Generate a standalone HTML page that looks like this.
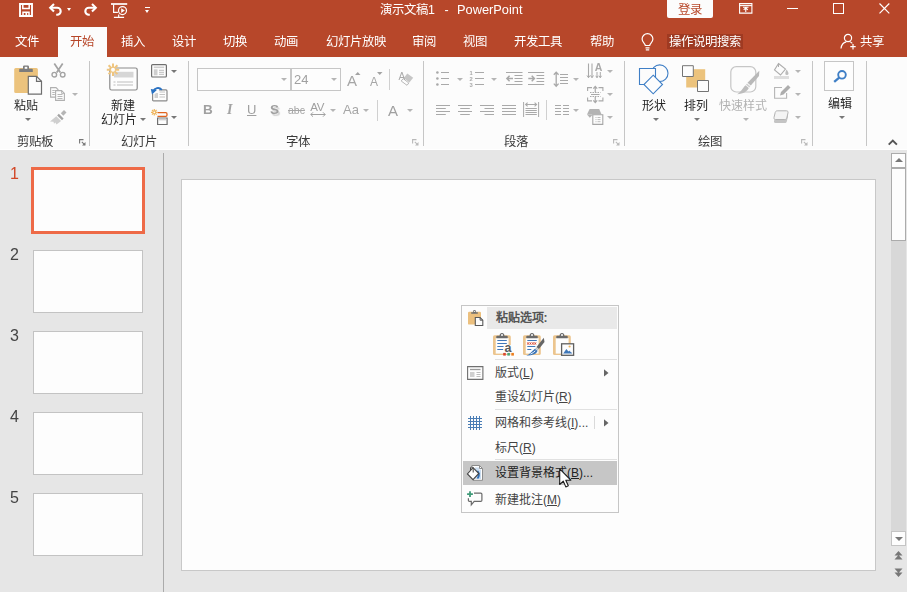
<!DOCTYPE html>
<html lang="zh-CN">
<head>
<meta charset="utf-8">
<title>PowerPoint</title>
<style>
*{box-sizing:border-box;margin:0;padding:0}
html,body{width:907px;height:592px;overflow:hidden;background:#e6e6e6}
body{font-family:"Liberation Sans",sans-serif;font-size:12.4px;color:#262626;position:relative}
.abs{position:absolute}
#all{position:absolute;left:0;top:0;width:907px;height:592px;will-change:transform}
#titlebar{position:absolute;left:0;top:0;width:907px;height:57px;background:#b7472a}
.t{position:absolute;white-space:nowrap;line-height:16px;height:16px}
.tab{position:absolute;top:33.700px;margin-left:.5px;color:#fff;font-size:12.4px;line-height:16px;white-space:nowrap}
#tabhome{position:absolute;left:58px;top:27px;width:49px;height:30px;background:#fcfcfc}
#ribbon{position:absolute;left:0;top:57px;width:907px;height:93px;background:#fcfcfc;border-bottom:1px solid #fff}
#ribbonline{position:absolute;left:0;top:150px;width:907px;height:1px;background:#d5d5d5}
.sep{position:absolute;top:61px;width:1px;height:84.700px;background:#c6c6c6}
.ssep{position:absolute;width:1px;background:#d0d0d0}
.lbl{position:absolute;top:133.500px;font-size:12.4px;line-height:16px;color:#3a3a3a;white-space:nowrap}
.btxt{position:absolute;font-size:12px;line-height:15px;color:#262626;white-space:nowrap;text-align:center}
.dd{position:absolute;width:0;height:0;border-left:3px solid transparent;border-right:3px solid transparent;border-top:3px solid #777}
.ddl{position:absolute;width:0;height:0;border-left:3px solid transparent;border-right:3px solid transparent;border-top:3px solid #b5b5b5}
svg{position:absolute;overflow:visible}
#work{position:absolute;left:0;top:150px;width:907px;height:442px;background:#e6e6e6}
.num{position:absolute;left:5.500px;width:18px;text-align:center;font-size:16px;line-height:16px;color:#444}
.thumb{position:absolute;left:33px;width:110px;height:63px;background:#fdfdfd;border:1px solid #c3c3c3}
#slide{position:absolute;left:181px;top:179px;width:695px;height:392px;background:#fdfdfd;border:1px solid #c8c8c8}
#menu{position:absolute;left:461px;top:305px;width:158px;height:208px;background:#fdfdfd;border:1px solid #c6c6c6}
.mi{position:absolute;left:495px;font-size:12px;line-height:16px;color:#444;white-space:nowrap}
.mi u{text-decoration:underline}
.msep{position:absolute;left:495px;width:122px;height:1px;background:#e1e1e1}
</style>
</head>
<body><div id="all">
<div id="titlebar"></div>
<div id="tabhome"></div>
<div id="ribbon"></div>
<div id="ribbonline"></div>
<div id="work"></div>

<!-- quick access toolbar -->
<svg style="left:19px;top:3px" width="14" height="14" viewBox="0 0 14 14" fill="none" stroke="#fff"><path d="M1 1h12v12H1z" stroke-width="1.900"/><path d="M3.800 1.500v4h6.400v-4" stroke-width="1.500"/><path d="M4 12.500V9.300h6v3.200" stroke-width="1.500"/><path d="M7.300 10v2.500" stroke-width="1.700"/></svg>
<svg style="left:47.500px;top:3px" width="15" height="13" viewBox="0 0 15 13" fill="none" stroke="#fff" stroke-width="2.100"><path d="M2.500 4.800h6.700a3.500 3.500 0 0 1 0 7H8.200"/><path d="M6 1L2.200 4.800 6 8.600"/></svg>
<div class="abs" style="left:67.200px;top:8px;width:0;height:0;border-left:2.500px solid transparent;border-right:2.500px solid transparent;border-top:3px solid #fff"></div>
<svg style="left:82.800px;top:3px" width="15" height="13" viewBox="0 0 15 13" fill="none" stroke="#fff" stroke-width="2.100"><path d="M12.500 4.800H5.800a3.500 3.500 0 0 0 0 7h1"/><path d="M9 1l3.800 3.800L9 8.600"/></svg>
<svg style="left:111px;top:3px" width="17" height="15" viewBox="0 0 17 15" fill="none" stroke="#fff" stroke-width="1.200"><path d="M0 1h16.200" stroke-width="1.700"/><path d="M2.600 1.500v7.800h4.300"/><circle cx="11.500" cy="7.600" r="4"/><path d="M10.200 5.300v4.600l3.600-2.300z" fill="#fff" stroke="none"/><path d="M7.700 11.500v2.500M2.900 14.400h10.200"/></svg>
<div class="abs" style="left:144.800px;top:7px;width:5.500px;height:1.300px;background:#fff"></div>
<div class="abs" style="left:144.800px;top:9.700px;width:0;height:0;border-left:2.750px solid transparent;border-right:2.750px solid transparent;border-top:3.200px solid #fff"></div>
<div class="t" style="left:380px;top:1.700px;color:#fff;font-size:12.4px">演示文稿1</div>
<div class="t" style="left:444.500px;top:1.700px;color:#fff;font-size:12.4px">-</div>
<div class="t" style="left:457px;top:1.500px;color:#fff;font-size:12.800px">PowerPoint</div>
<div class="abs" style="left:667px;top:0;width:46px;height:18px;background:#fcfcfc;border-radius:0 0 2px 2px"></div>
<div class="t" style="left:677.500px;top:1.700px;color:#b7472a;font-size:12.4px">登录</div>
<!-- window controls -->
<svg style="left:739px;top:3px" width="14" height="11" viewBox="0 0 14 11" fill="none" stroke="#fff" stroke-width="1.100"><path d="M.6 .6h12.300v9.500H.6z"/><path d="M.6 2.600h12.300"/><path d="M6.750 9V5M4.700 6.800l2.050-2 2.050 2M4 4.300h5.500"/></svg>
<div class="abs" style="left:787px;top:8px;width:11px;height:1px;background:#fff"></div>
<div class="abs" style="left:833px;top:3px;width:10.500px;height:10.500px;border:1.200px solid #fff"></div>
<svg style="left:879px;top:3px" width="11" height="11" viewBox="0 0 11 11" fill="none" stroke="#fff" stroke-width="1.200"><path d="M.5 .5l9.800 9.800M10.300 .5L.5 10.300"/></svg>
<!-- tabs -->
<div class="tab" style="left:14px">文件</div>
<div class="tab" style="left:69px;color:#b7472a">开始</div>
<div class="tab" style="left:120px">插入</div>
<div class="tab" style="left:171px">设计</div>
<div class="tab" style="left:222px">切换</div>
<div class="tab" style="left:273px">动画</div>
<div class="tab" style="left:325px">幻灯片放映</div>
<div class="tab" style="left:411px">审阅</div>
<div class="tab" style="left:462px">视图</div>
<div class="tab" style="left:513px">开发工具</div>
<div class="tab" style="left:589px">帮助</div>
<svg style="left:641px;top:33px" width="13" height="18" viewBox="0 0 13 18" fill="none" stroke="#fff" stroke-width="1.2"><path d="M4.3 12.5c0-2-3.2-3.2-3.2-6.4a5.4 5.4 0 0 1 10.8 0c0 3.2-3.200 4.400-3.200 6.400z"/><path d="M4.500 14.800h4M4.800 16.800h3.400"/></svg>
<div class="abs" style="left:667px;top:34px;width:75.500px;height:15px;background:#9f3a22"></div>
<div class="tab" style="left:668px">操作说明搜索</div>
<svg style="left:840px;top:33px" width="17" height="17" viewBox="0 0 17 17" fill="none" stroke="#fff" stroke-width="1.2"><circle cx="8" cy="5" r="3.6"/><path d="M1 15.500c.5-4 3-6.200 5.300-6.600M9.800 8.800c1 .3 1.800 .8 2.500 1.500"/><path d="M13 11v5.500M10.300 13.700h5.400"/></svg>
<div class="tab" style="left:859px">共享</div>
<!--TITLE-->

<!-- ===== clipboard group ===== -->
<svg style="left:14px;top:65px" width="29" height="30" viewBox="0 0 29 30"><rect x=".2" y="3" width="23.700" height="25" rx="1.500" fill="#ecc37d"/><path d="M5.200 7V4.500c0-.5.300-.8.800-.8h3V2c0-.8.500-1.400 1.300-1.400h3.400c.8 0 1.300.6 1.300 1.400v1.700h3c.5 0 .8.300.8.800V7z" fill="#7c7c7c"/><rect x="10.700" y="1.800" width="2.600" height="2" fill="#fcfcfc"/><path d="M14.300 11.300h8.200l5 5v12.800H14.300z" fill="#fdfdfd" stroke="#6e6e6e" stroke-width="1.200"/><path d="M22.500 11.300v5h5" fill="none" stroke="#6e6e6e" stroke-width="1.200"/></svg>
<div class="btxt" style="left:13.8px;top:99px">粘贴</div>
<div class="dd" style="left:24.500px;top:118px"></div>
<svg style="left:50.500px;top:63px" width="15" height="15" viewBox="0 0 15 15" fill="none" stroke="#a3a3a3" stroke-width="1.700"><path d="M3.300 .5l6 9M11.700 .5l-6 9"/><circle cx="3.300" cy="11.700" r="2.300" stroke-width="1.400"/><circle cx="11.700" cy="11.700" r="2.300" stroke-width="1.400"/></svg>
<svg style="left:50px;top:87px" width="16" height="14" viewBox="0 0 16 14" fill="none" stroke="#b0b0b0" stroke-width="1.100"><path d="M.6 .6h5.400l2 2v7.500H.6z" fill="#fcfcfc"/><path d="M2.300 3.500h2.500M2.300 5.500h2.500M2.300 7.500h2.500" stroke-width=".9"/><path d="M5.600 3.600h6l2.800 2.800v7H5.600z" fill="#fcfcfc"/><path d="M11.600 3.600v2.800h2.800" stroke-width=".9"/><path d="M7.500 7.500h5M7.500 9.500h5M7.500 11.500h5" stroke-width=".9"/></svg>
<div class="ddl" style="left:72px;top:93px"></div>
<svg style="left:50px;top:109.500px" width="17" height="15" viewBox="0 0 17 15"><path d="M10.800 3.200L14 0l2.500 2.500-3.200 3.200z" fill="#b5b5b5"/><path d="M8.800 3.800l4.800 4.800-1.600 1.600-4.800-4.800z" fill="#a3a3a3"/><path d="M6.300 6.300l4.800 4.800L6.500 14.500l-1-2-1.500 1.200-.5-2L0 11.500z" fill="#cfcfcf"/></svg>
<div class="lbl" style="left:17px">剪贴板</div>
<svg style="left:78.500px;top:139px" width="7" height="7" viewBox="0 0 7 7" fill="none" stroke="#777" stroke-width="1.100"><path d="M.6 4.500V.6h3.900"/><path d="M2.800 2.800l3 3"/><path d="M6.500 3v3.500H3z" fill="#777" stroke="none"/></svg>
<div class="sep" style="left:89px"></div>
<!-- ===== slides group ===== -->
<svg style="left:106px;top:62.500px" width="32" height="28" viewBox="0 0 32 28"><rect x="3.800" y="5" width="27.400" height="22" rx="1.800" fill="#fdfdfd" stroke="#8a8a8a" stroke-width="1.200"/><path d="M8 8.800h19.500v5.700H8z" fill="#d6d6d6"/><path d="M11 19h16M11 22h16" stroke="#bdbdbd" stroke-width="1"/><path d="M7.500 19h2M7.500 22h2" stroke="#bdbdbd" stroke-width="1"/><g stroke="#efc57f" stroke-width="2"><path d="M7 .5v12.500M.8 6.700h12.400M2.600 2.300l8.800 8.800M11.400 2.300L2.600 11.100"/></g><circle cx="7" cy="6.700" r="2" fill="#fdfdfd"/></svg>
<div class="btxt" style="left:110.500px;top:99px">新建</div>
<div class="btxt" style="left:100.500px;top:112.800px">幻灯片</div>
<div class="dd" style="left:140px;top:118px"></div>
<svg style="left:151px;top:64.300px" width="16" height="14" viewBox="0 0 16 14" fill="none"><rect x=".6" y=".6" width="14.800" height="12.400" rx="1" fill="#fdfdfd" stroke="#6f6f6f" stroke-width="1.200"/><path d="M2.800 2.500h10.400v1.600H2.800z" fill="#cfcfcf"/><path d="M2.800 5.300h3.700v6H2.800z" fill="#cfcfcf"/><path d="M8 6.300h5M8 8.300h5M8 10.300h5" stroke="#b5b5b5" stroke-width=".9"/></svg>
<div class="dd" style="left:171px;top:70px"></div>
<svg style="left:151px;top:87px" width="17" height="15" viewBox="0 0 17 15" fill="none"><rect x="1.600" y="2.900" width="14.400" height="11" rx="1" fill="#fdfdfd" stroke="#8a8a8a" stroke-width="1.200"/><path d="M3.500 6h3.500v5H3.500z" fill="#d0d0d0"/><path d="M8.500 5h5.500M8.500 7.500h5.500M8.500 10h5.500" stroke="#bdbdbd" stroke-width=".9"/><path d="M0 0h8v4.500H4.500v2.500H0z" fill="#fcfcfc"/><path d="M10.800 2.800C8 -.2 3.600 .8 2.200 4.500" stroke="#2a72c2" stroke-width="1.900"/><path d="M-.2 2l6 1-4.800 4.600z" fill="#2a72c2"/></svg>
<svg style="left:151px;top:109px" width="17" height="16" viewBox="0 0 17 16" fill="none"><path d="M6.500 3.700h8.300c.7 0 1.200.5 1.200 1.200v1.200c0 .7-.5 1.200-1.200 1.200H6.500" stroke="#e0641f" stroke-width="1.300"/><path d="M6.600 9h9.500v6.500H6.600z" fill="#fdfdfd" stroke="#6f6f6f" stroke-width="1.200"/><path d="M7.500 10.600h7.700" stroke="#cfcfcf" stroke-width="1.600"/><g stroke="#efb65e" stroke-width="1.200"><path d="M3.300 0v6.600M0 3.300h6.600M1 1l4.600 4.600M5.600 1L1 5.600"/></g><circle cx="3.300" cy="3.300" r=".9" fill="#fdfdfd"/></svg>
<div class="dd" style="left:171px;top:116px"></div>
<div class="lbl" style="left:121px">幻灯片</div>
<div class="sep" style="left:188px"></div>

<!-- ===== font group ===== -->
<div class="abs" style="left:197px;top:68px;width:94px;height:23px;border:1px solid #c6c6c6;background:#fdfdfd"></div>
<div class="abs" style="left:291px;top:68px;width:50px;height:23px;border:1px solid #c6c6c6;background:#fdfdfd"></div>
<div class="ddl" style="left:280.500px;top:78px"></div>
<div class="t" style="left:294px;top:72px;font-size:13px;color:#a0a0a0">24</div>
<div class="ddl" style="left:330.500px;top:78px"></div>
<div class="t" style="left:347px;top:71.500px;font-size:15px;color:#a6a6a6;line-height:18px;height:18px">A</div>
<svg style="left:354.800px;top:72px" width="6" height="3" viewBox="0 0 6 3"><path d="M0 3L2.750 0 5.500 3z" fill="#a3a3a3"/></svg>
<div class="t" style="left:370px;top:74px;font-size:12px;color:#a6a6a6;line-height:16px">A</div>
<svg style="left:376.600px;top:72px" width="6" height="3" viewBox="0 0 6 3"><path d="M0 0L2.750 3 5.500 0z" fill="#a3a3a3"/></svg>
<div class="ssep" style="left:389px;top:69px;height:21px"></div>
<svg style="left:398px;top:71px" width="16" height="16" viewBox="0 0 16 16"><path d="M9.300 2.500l5.900 4.300-3.800 4.600-5.700-4.500z" fill="#c6c6c6"/><path d="M5.200 7.600l5.600 4.400-1.800 2.300-5.800-4.300z" fill="#fdfdfd" stroke="#b9b9b9" stroke-width="1"/><text x=".6" y="8.600" font-family="Liberation Sans" font-size="10" fill="#a9a9a9">A</text></svg>
<div class="t" style="left:203px;top:102px;font-size:13.500px;font-weight:bold;color:#a0a0a0">B</div>
<div class="t" style="left:227px;top:102px;font-size:14px;font-style:italic;font-weight:bold;font-family:'Liberation Serif',serif;color:#a3a3a3">I</div>
<div class="t" style="left:247px;top:102px;font-size:13px;color:#a0a0a0;text-decoration:underline">U</div>
<div class="t" style="left:270px;top:102px;font-size:13.500px;font-weight:bold;color:#a0a0a0;text-shadow:1.500px 1.500px 1px #d2d2d2">S</div>
<div class="t" style="left:288px;top:102px;font-size:10.500px;color:#a6a6a6;text-decoration:line-through">abc</div>
<div class="t" style="left:310.300px;top:99px;font-size:11.500px;color:#a0a0a0;letter-spacing:-.3px">AV</div>
<svg style="left:310px;top:112px" width="16" height="5" viewBox="0 0 16 5" fill="none" stroke="#a0a0a0" stroke-width="1"><path d="M.8 2.500h14.400M3 .3L.8 2.500 3 4.700M13 .3l2.200 2.200L13 4.700"/></svg>
<div class="ddl" style="left:329.500px;top:109px"></div>
<div class="t" style="left:343px;top:102px;font-size:13px;color:#a6a6a6">Aa</div>
<div class="ddl" style="left:362.500px;top:109px"></div>
<div class="ssep" style="left:377px;top:100px;height:21px"></div>
<div class="t" style="left:388px;top:101.500px;font-size:15px;color:#a0a0a0;line-height:18px;height:18px">A</div>
<div class="ddl" style="left:406.500px;top:109px"></div>
<div class="lbl" style="left:286px">字体</div>
<svg style="left:411.8px;top:139px" width="7" height="7" viewBox="0 0 7 7" fill="none" stroke="#b9b9b9" stroke-width="1.100"><path d="M.6 4.500V.6h3.900"/><path d="M2.800 2.800l3 3"/><path d="M6.500 3v3.500H3z" fill="#b9b9b9" stroke="none"/></svg>
<div class="sep" style="left:423px"></div>

<!-- ===== paragraph group ===== -->
<svg style="left:436px;top:71px" width="14" height="15" viewBox="0 0 14 15" fill="none" stroke="#a9a9a9" stroke-width="1"><path d="M5 1.5H13M5 7.5H13M5 13.5H13"/><g fill="#a9a9a9" stroke="none"><circle cx="1.400" cy="1.500" r="1.300"/><circle cx="1.400" cy="7.500" r="1.300"/><circle cx="1.400" cy="13.500" r="1.300"/></g></svg>
<div class="ddl" style="left:456.500px;top:78px"></div>
<svg style="left:469px;top:70px" width="15" height="17" viewBox="0 0 15 17" fill="none" stroke="#a9a9a9" stroke-width="1"><path d="M6 2.5H15M6 8.5H15M6 14.5H15"/><g font-family="Liberation Sans" font-size="5.800" font-weight="bold" fill="#a9a9a9" stroke="none"><text x=".6" y="4.600">1</text><text x=".6" y="10.600">2</text><text x=".6" y="16.600">3</text></g></svg>
<div class="ddl" style="left:490.500px;top:78px"></div>
<svg style="left:506px;top:72px" width="17" height="13" viewBox="0 0 17 13" fill="none" stroke="#a9a9a9" stroke-width="1"><path d="M0 0.5H16.5M8.5 3.5H16.5M8.5 6.5H16.5M8.5 9.5H16.5M0 12.5H16.5"/><path d="M1 6.500h6M3.600 3.800L.9 6.500l2.700 2.700" stroke-width="1.500"/></svg>
<svg style="left:528px;top:72px" width="17" height="13" viewBox="0 0 17 13" fill="none" stroke="#a9a9a9" stroke-width="1"><path d="M0 0.5H16.2M8.5 3.5H16.2M8.5 6.5H16.2M8.5 9.5H16.2M0 12.5H16.2"/><path d="M.3 6.500h6M3.700 3.800l2.700 2.700-2.700 2.700" stroke-width="1.500"/></svg>
<svg style="left:553px;top:71px" width="16" height="16" viewBox="0 0 16 16" fill="none" stroke="#a9a9a9" stroke-width="1"><path d="M7 3.500h8M7 6.500h8M7 9.500h8M7 12.500h8"/><path d="M3.200 1.200v14M.8 3.800L3.200 1.200l2.400 2.600M.8 12.600l2.400 2.600 2.400-2.600" stroke-width="1.300"/></svg>
<div class="ddl" style="left:572.500px;top:78px"></div>
<svg style="left:436px;top:105px" width="14" height="10" viewBox="0 0 14 10" fill="none" stroke="#a9a9a9" stroke-width="1"><path d="M0 0.5H14M0 3.5H9.8M0 6.5H14M0 9.5H9.8"/></svg>
<svg style="left:458px;top:105px" width="14" height="10" viewBox="0 0 14 10" fill="none" stroke="#a9a9a9" stroke-width="1"><path d="M0 0.5H14M2.2 3.5H11.8M0 6.5H14M2.2 9.5H11.8"/></svg>
<svg style="left:480px;top:105px" width="14" height="10" viewBox="0 0 14 10" fill="none" stroke="#a9a9a9" stroke-width="1"><path d="M0 0.5H14M4.5 3.5H14M0 6.5H14M4.5 9.5H14"/></svg>
<svg style="left:502px;top:105px" width="14" height="10" viewBox="0 0 14 10" fill="none" stroke="#a9a9a9" stroke-width="1"><path d="M0 0.5H14M0 3.5H14M0 6.5H14M0 9.5H14"/></svg>
<svg style="left:523px;top:102px" width="16" height="15" viewBox="0 0 16 15" fill="none" stroke="#a9a9a9" stroke-width="1"><path d="M.6 0v15M15.600 0v15"/><path d="M2.600 2.500h11M4.600 .6L2.600 2.500l2 1.900M11.600 .6l2 1.900-2 1.900" stroke-width="1.100"/><path d="M2.5 6.5H13.8M2.5 8.5H13.8M2.5 10.5H13.8M2.5 12.5H13.8"/></svg>
<div class="ssep" style="left:546px;top:100px;height:20px"></div>
<svg style="left:555px;top:105px" width="14" height="10" viewBox="0 0 14 10" fill="none" stroke="#a9a9a9" stroke-width="1"><path d="M0 0.5H6M8 0.5H14M0 3.5H6M8 3.5H14M0 6.5H6M8 6.5H14M0 9.5H6M8 9.5H14"/></svg>
<div class="ddl" style="left:573px;top:109px"></div>
<!-- right column -->
<svg style="left:587px;top:63px" width="17" height="16" viewBox="0 0 17 16" fill="none" stroke="#a9a9a9" stroke-width="1.100"><path d="M1.500 .5v14M5 .5v14"/><path d="M0 12.500l1.500 2.200L3 12.500M3.500 12.500L5 14.700l1.500-2.200" stroke-width="1"/><text x="7.800" y="8" font-family="Liberation Sans" font-size="10.500" font-weight="bold" fill="#a9a9a9" stroke="none">A</text><path d="M10 9v5.700M13.300 9v5.700M8.800 12.800l1.200 1.900 1.200-1.900M12.100 12.800l1.200 1.900 1.200-1.900" stroke-width="1"/></svg>
<div class="ddl" style="left:607px;top:70px"></div>
<svg style="left:587px;top:86px" width="17" height="17" viewBox="0 0 17 17" fill="none" stroke="#a9a9a9" stroke-width="1.100"><path d="M.6 5V1.600h4.400M11.500 1.600h4.400V5M.6 11.500v3.400h4.400M11.500 14.900h4.400v-3.400"/><path d="M3 6.500h10.500M3 10.500h10.500" stroke-dasharray="1.500 1" stroke-width="1"/><path d="M4 8.500h8.500" stroke-width="1"/><path d="M8.250 .5v6M6.300 2.600l1.950-2.100 1.950 2.100M8.250 10.500v6M6.300 14.400l1.950 2.100 1.950-2.100" stroke-width="1.200"/></svg>
<div class="ddl" style="left:607px;top:93px"></div>
<svg style="left:587px;top:109px" width="17" height="16" viewBox="0 0 17 16"><path d="M2.600 0h9.600l2.400 5.400H0z" fill="#b3b3b3"/><path d="M0 5.400h6L2.800 8.800z" fill="#b3b3b3"/><path d="M5.800 5.800h10v9.600h-10z" fill="#fdfdfd" stroke="#a6a6a6" stroke-width="1.100"/><path d="M8.500 8.500h1M10.500 8.500h3M8.500 10.600h1M10.500 10.600h3M8.500 12.700h1M10.500 12.700h3" stroke="#b5b5b5" stroke-width=".9"/></svg>
<div class="ddl" style="left:607px;top:116px"></div>
<div class="lbl" style="left:504px">段落</div>
<svg style="left:612.8px;top:139px" width="7" height="7" viewBox="0 0 7 7" fill="none" stroke="#b9b9b9" stroke-width="1.100"><path d="M.6 4.500V.6h3.900"/><path d="M2.800 2.800l3 3"/><path d="M6.500 3v3.500H3z" fill="#b9b9b9" stroke="none"/></svg>
<div class="sep" style="left:624px"></div>

<!-- ===== drawing group ===== -->
<svg style="left:638px;top:64px" width="31" height="30" viewBox="0 0 31 30" fill="none" stroke="#3f7fc6" stroke-width="1.100"><circle cx="21.700" cy="9.200" r="8.300" fill="#fcfcfc"/><path d="M1.500 4.500h16v16h-16z" fill="#fcfcfc"/><path d="M15.200 11.200l9.300 9.300-9.300 9.300-9.300-9.300z" fill="#fdfdfd"/></svg>
<div class="btxt" style="left:642px;top:99px">形状</div>
<div class="dd" style="left:652.500px;top:118px"></div>
<svg style="left:682px;top:65px" width="28" height="27" viewBox="0 0 28 27"><path d="M4.200 4.200h19v18.300h-19z" fill="#ecc37d"/><path d="M.5 .7h10.800v10.800H.5z" fill="#fdfdfd" stroke="#747474" stroke-width="1"/><path d="M15.500 15.500h11v11h-11z" fill="#fdfdfd" stroke="#747474" stroke-width="1"/></svg>
<div class="btxt" style="left:684px;top:99px">排列</div>
<div class="dd" style="left:694px;top:118px"></div>
<svg style="left:730px;top:66px" width="30" height="29" viewBox="0 0 30 29" fill="none"><rect x=".8" y=".6" width="25" height="25.400" rx="5.500" stroke="#c6c6c6" stroke-width="1.200" fill="#fcfcfc"/><path d="M29.300 4.800l-.3 5.200-8.200 9.500-3.300-2.700z" fill="#b9b9b9"/><path d="M17 17.400l3.300 2.800-1 1.300-3.400-2.800z" fill="#cfcfcf"/><path d="M15.500 19.200l3.300 2.700c-1.500 3.500-5 5.500-11.800 6.300 3.700-1.700 5-5.500 8.500-9z" fill="#bdbdbd"/></svg>
<div class="btxt" style="left:718.700px;top:99px;color:#b2b2b2">快速样式</div>
<div class="ddl" style="left:742.500px;top:118px"></div>
<svg style="left:774px;top:62.300px" width="16" height="17" viewBox="0 0 16 17" fill="none"><path d="M4.500 1.500l7 5.500-5 6-6-5z" stroke="#adadad" stroke-width="1.100" fill="#fcfcfc"/><path d="M4.500 1.500V5" stroke="#adadad"/><path d="M12.500 7.500c1.500 2 2 3 2 4a1.600 1.600 0 0 1-3.200 0c0-1.500 .7-2.500 1.200-4z" fill="#bdbdbd"/><path d="M0 14h15v3H0z" fill="#dedede"/></svg>
<div class="ddl" style="left:794.500px;top:70px"></div>
<svg style="left:774px;top:85px" width="17" height="14" viewBox="0 0 17 14" fill="none"><path d="M8 2.500H.6v10.800h12V8" stroke="#b5b5b5" stroke-width="1.100"/><path d="M14 0l2.500 2.500-7 7-3.500 1 1-3.500z" fill="#adadad"/></svg>
<div class="ddl" style="left:794.500px;top:93px"></div>
<svg style="left:773px;top:110px" width="17" height="14" viewBox="0 0 17 14" fill="none"><path d="M3 4.500h10.500c1.200 0 1.800.8 1.500 2l-1.200 5c-.3 1-1 1.500-2 1.500H2.500c-1.200 0-1.800-.8-1.500-2z" fill="#c4c4c4"/><path d="M4.200 .8h9.300c1.200 0 1.800.8 1.500 2L13.800 8c-.3 1-1 1.500-2 1.500H2.500C1.300 9.500.7 8.700 1 7.500l1.200-5c.3-1.100 1-1.700 2-1.700z" fill="#f4f4f4" stroke="#b3b3b3" stroke-width="1"/></svg>
<div class="ddl" style="left:794.500px;top:116px"></div>
<div class="lbl" style="left:698px">绘图</div>
<svg style="left:800.8px;top:139px" width="7" height="7" viewBox="0 0 7 7" fill="none" stroke="#b9b9b9" stroke-width="1.100"><path d="M.6 4.500V.6h3.900"/><path d="M2.800 2.800l3 3"/><path d="M6.500 3v3.500H3z" fill="#b9b9b9" stroke="none"/></svg>
<div class="sep" style="left:812px"></div>
<!-- ===== editing ===== -->
<div class="abs" style="left:824px;top:61px;width:30px;height:30px;border:1px solid #c6c6c6;background:#fdfdfd"></div>
<svg style="left:832.500px;top:69.500px" width="14" height="13" viewBox="0 0 14 13" fill="none" stroke="#3f7fc6" stroke-width="1.900"><circle cx="9" cy="4.800" r="3.800" fill="#fdfdfd"/><path d="M6.200 7.600L1.200 11.800" stroke-width="2.300"/></svg>
<div class="btxt" style="left:827.700px;top:97px">编辑</div>
<div class="dd" style="left:838.500px;top:116px"></div>
<div class="sep" style="left:866px"></div>
<svg style="left:888px;top:139px" width="10" height="7" viewBox="0 0 10 7" fill="none" stroke="#555" stroke-width="1.900"><path d="M.7 5.700L4.800 1.500l4.100 4.200"/></svg>





<!-- ===== thumbnails ===== -->
<div class="num" style="top:166px;color:#d24726">1</div>
<div class="abs" style="left:31px;top:167px;width:114px;height:67px;background:#fdfdfd;border:3px solid #ee6a47"></div>
<div class="num" style="top:247px">2</div><div class="thumb" style="top:250px"></div>
<div class="num" style="top:328px">3</div><div class="thumb" style="top:331px"></div>
<div class="num" style="top:409px">4</div><div class="thumb" style="top:412px"></div>
<div class="num" style="top:490px">5</div><div class="thumb" style="top:493px"></div>
<div class="abs" style="left:163px;top:153px;width:1px;height:439px;background:#ababab"></div>
<!-- ===== slide ===== -->
<div id="slide"></div>
<!-- ===== scrollbar ===== -->
<div class="abs" style="left:891px;top:153px;width:15px;height:393px;background:#d8d8d8"></div>
<div class="abs" style="left:891px;top:153px;width:15px;height:15px;background:#fdfdfd;border:1px solid #ababab"></div>
<div class="abs" style="left:894.500px;top:158px;width:0;height:0;border-left:4px solid transparent;border-right:4px solid transparent;border-bottom:4px solid #777"></div>
<div class="abs" style="left:891px;top:168px;width:15px;height:73px;background:#fdfdfd;border:1px solid #ababab"></div>
<div class="abs" style="left:891px;top:531px;width:15px;height:15px;background:#fdfdfd;border:1px solid #c4c4c4"></div>
<div class="abs" style="left:894.500px;top:537px;width:0;height:0;border-left:4px solid transparent;border-right:4px solid transparent;border-top:4px solid #777"></div>
<svg style="left:894px;top:551px" width="9" height="9" viewBox="0 0 9 9" fill="#777"><path d="M4.500 0L8.500 4.500H.5zM4.500 4L8.500 8.500H.5z"/></svg>
<svg style="left:894px;top:568px" width="9" height="9" viewBox="0 0 9 9" fill="#777"><path d="M4.500 9L8.500 4.500H.5zM4.500 5L8.500 .5H.5z"/></svg>


</div>
<!-- ===== context menu ===== -->
<div id="menu"></div>
<div class="abs" style="left:487px;top:307px;width:130px;height:22px;background:#e9e9e9"></div>
<svg style="left:468px;top:310px" width="16" height="16" viewBox="0 0 16 16"><rect x="0" y="1.800" width="13" height="12.800" rx="1.200" fill="#ecc07e"/><path d="M3.200 3.800V2.300h2V1.200C5.200 .5 5.700 0 6.400 0h.2c.7 0 1.200.5 1.200 1.200v1.100h2v1.500z" fill="#6f6f6f"/><circle cx="6.500" cy="1.300" r=".6" fill="#fdfdfd"/><path d="M7.300 7.500h4.800l2.700 2.700v5.300H7.300z" fill="#fdfdfd" stroke="#5a5a5a" stroke-width="1.100"/><path d="M12.100 7.500v2.700h2.700" fill="none" stroke="#5a5a5a" stroke-width="1"/></svg>
<div class="mi" style="top:310px;font-weight:bold;color:#555;left:495.500px">粘贴选项:</div>
<svg style="left:493px;top:333px" width="22" height="23" viewBox="0 0 22 23"><rect x="0" y="2.300" width="17.800" height="19.700" rx="1.600" fill="#ecc58e"/><path d="M2.700 5h12.900v15.600H2.700z" fill="#fdfdfd"/><path d="M3.300 5.300V3.600c0-.5.300-.8.800-.8h2.500V2.300C6.600 1 7.600 0 8.900 0h.2c1.300 0 2.300 1 2.300 2.300v.5h2.500c.5 0 .8.300.8.800v1.700z" fill="#6a6a6a"/><circle cx="9" cy="2" r="1" fill="#fdfdfd"/><path d="M4.300 7.500h9.500M4.300 10.500h9.500M4.300 13.500h6.400M4.300 16.500h5.900" stroke="#3f77b8" stroke-width="1.100" fill="none"/><rect x="10.800" y="12" width="8" height="8.500" fill="#fdfdfd"/><text x="11.400" y="19.400" font-family="Liberation Sans" font-size="12.500" font-weight="bold" fill="#5a5a5a">a</text><rect x="10.200" y="19.900" width="2.600" height="2.700" fill="#d9452c"/><rect x="14.300" y="19.900" width="2.600" height="2.700" fill="#4aa577"/><rect x="18.300" y="19.900" width="2.600" height="2.700" fill="#ec7d1c"/></svg>
<svg style="left:523px;top:333px" width="22" height="23" viewBox="0 0 22 23"><rect x="0" y="2.300" width="17.800" height="19.700" rx="1.600" fill="#ecc58e"/><path d="M2.700 5h12.900v15.600H2.700z" fill="#fdfdfd"/><path d="M3.300 5.300V3.600c0-.5.300-.8.800-.8h2.500V2.300C6.600 1 7.600 0 8.900 0h.2c1.300 0 2.300 1 2.300 2.300v.5h2.500c.5 0 .8.300.8.800v1.700z" fill="#6a6a6a"/><circle cx="9" cy="2" r="1" fill="#fdfdfd"/><path d="M4.300 7.500h9.500M4.300 13.500h8M4.300 16.500h4" stroke="#3f77b8" stroke-width="1.100" fill="none"/><path d="M4.300 9.400l1.500 2.200M5.800 9.400L4.300 11.600M6.700 9.400l1.500 2.200M8.200 9.400L6.700 11.600M9.100 9.400l1.500 2.200M10.600 9.400L9.100 11.600M11.500 9.400l1.500 2.200M13 9.400l-1.500 2.200" stroke="#d9452c" stroke-width=".9" fill="none"/><path d="M20.800 4.800l.7 4.200-5.600 7-2.400-2z" fill="#666"/><path d="M13.200 14.300l2.500 2-1 1.200-2.500-2z" fill="#bfbfbf"/><path d="M11.900 15.700l2.600 2.100c-.8 3.300-4.500 4.500-11.200 5 3.500-1.500 5.300-4.300 8.600-7.100z" fill="#3f77b8"/><path d="M7.500 21c2-.8 3.600-1.800 4.800-3.200" stroke="#e4eefa" stroke-width="1" fill="none"/></svg>
<svg style="left:553px;top:333px" width="22" height="23" viewBox="0 0 22 23"><rect x="0" y="2.300" width="17.800" height="19.700" rx="1.600" fill="#ecc58e"/><path d="M2.700 5h12.900v15.600H2.700z" fill="#fdfdfd"/><path d="M3.300 5.300V3.600c0-.5.300-.8.800-.8h2.500V2.300C6.600 1 7.600 0 8.900 0h.2c1.300 0 2.300 1 2.300 2.300v.5h2.500c.5 0 .8.300.8.800v1.700z" fill="#6a6a6a"/><circle cx="9" cy="2" r="1" fill="#fdfdfd"/><rect x="8.600" y="10.800" width="12" height="11.500" fill="#fdfdfd" stroke="#5f5f5f" stroke-width="1.300"/><path d="M10.200 20.600l3.200-4.600 2 2.600 1.300-1.300 2.600 3.300z" fill="#3f77b8"/><path d="M15.500 16.200l2.500 3" stroke="#fdfdfd" stroke-width=".7"/><circle cx="16.600" cy="13.500" r="1.100" fill="#ecb35c"/></svg>
<div class="msep" style="top:359px"></div>
<svg style="left:467px;top:366px" width="17" height="14" viewBox="0 0 17 14" fill="none"><path d="M.6 .6h15.300v12.800H.6z" fill="#fdfdfd" stroke="#6f6f6f" stroke-width="1.100"/><path d="M3 3.500h10.500" stroke="#9a9a9a" stroke-width="1.300"/><path d="M3 6h4.500v5H3z" fill="#cfcfcf"/><path d="M9.500 6.500h4M9.500 8.500h4M9.500 10.500h4" stroke="#b5b5b5" stroke-width=".9"/></svg>
<div class="mi" style="top:365px">版式(<u>L</u>)</div>
<svg style="left:604px;top:368.6px" width="5" height="8" viewBox="0 0 5 8"><path d="M0 .3L4.500 3.900 0 7.500z" fill="#666"/></svg>
<div class="mi" style="top:389.200px">重设幻灯片(<u>R</u>)</div>
<div class="msep" style="top:409px"></div>
<svg style="left:467px;top:415px" width="16" height="16" viewBox="0 0 16 16" fill="none" stroke="#4a7db5" stroke-width="1"><path d="M3.500 1v14M6.500 1v14M9.500 1v14M12.500 1v14M1 3.500h14M1 6.500h14M1 9.500h14M1 12.500h14"/></svg>
<div class="mi" style="top:415.300px">网格和参考线(<u>I</u>)...</div>
<div class="abs" style="left:594px;top:416px;width:1px;height:13px;background:#dadada"></div>
<svg style="left:604px;top:418.6px" width="5" height="8" viewBox="0 0 5 8"><path d="M0 .3L4.500 3.900 0 7.500z" fill="#666"/></svg>
<div class="mi" style="top:439.700px">标尺(<u>R</u>)</div>
<div class="msep" style="top:459px"></div>
<div class="abs" style="left:463px;top:461px;width:154px;height:24px;background:#c6c6c6"></div>
<svg style="left:467px;top:465px" width="17" height="16" viewBox="0 0 17 16" fill="none"><path d="M4.500 .5h8l3 3v11.800H6" fill="#fdfdfd" stroke="#8c8c8c" stroke-width="1"/><path d="M12.500 .5v3h3" stroke="#8c8c8c" stroke-width="1"/><path d="M8 2.500h4v2h2v9.500H8z" fill="#c9dcef"/><path d="M11 5.500c2 1.500 2.500 5 .8 8h-2c1.500-3 1.200-5.500 0-7.200z" fill="#2f6db5"/><path d="M6 2.700l5.800 5.800-5.800 6.200L.4 9z" fill="#fdfdfd" stroke="#444" stroke-width="1.100"/><path d="M6.200 7.500V3c0-1.500-2.700-1.500-2.700 0v2.300" stroke="#444" stroke-width="1"/></svg>
<div class="mi" style="top:465.200px;color:#222">设置背景格式(<u>B</u>)...</div>
<svg style="left:467px;top:491px" width="16" height="15" viewBox="0 0 16 15" fill="none"><path d="M7 2.200h6.800c.7 0 1.100.4 1.100 1.100v6c0 .7-.4 1.100-1.100 1.100H7.200L4.300 13.800v-3.400H2.500c-.7 0-1.100-.4-1.100-1.100V7.300" stroke="#6a6a6a" stroke-width="1.200"/><path d="M3 .2v5.800M.1 3.100h5.800" stroke="#3f9a78" stroke-width="1.800"/></svg>
<div class="mi" style="top:491.600px">新建批注(<u>M</u>)</div>
<!-- cursor -->
<svg style="left:559px;top:468px" width="13" height="20" viewBox="0 0 13 20"><path d="M.7 .9v15.600l3.600-3.400 2.500 5.800 2.500-1.100-2.500-5.600h5z" fill="#fff" stroke="#1a1a1a" stroke-width="1.100" stroke-linejoin="round"/></svg>

</body>
</html>
